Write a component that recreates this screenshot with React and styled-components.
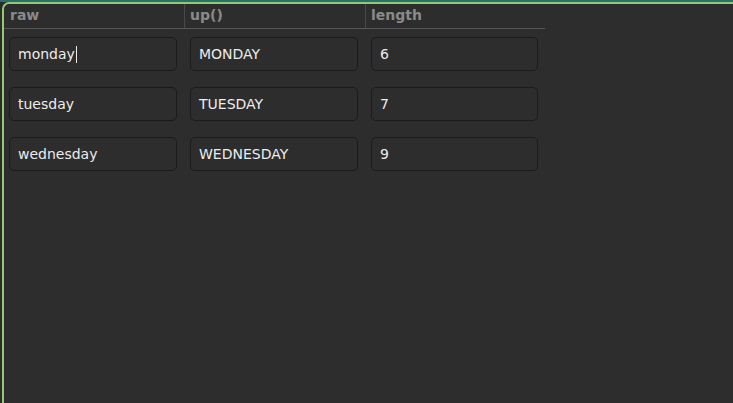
import React from "react";
import styled, { createGlobalStyle } from "styled-components";

const GlobalStyle = createGlobalStyle`
  html, body {
    margin: 0;
    padding: 0;
    background: #2b2b2b;
    overflow: hidden;
  }
  body {
    font-family: "DejaVu Sans", "Noto Sans", sans-serif;
  }
`;

const rows = [
  { raw: "monday", focused: true },
  { raw: "tuesday" },
  { raw: "wednesday" },
];

export default function App() {
  return (
    <>
      <GlobalStyle />
      <Screen>
        <TopStrip />
        <Window>
          <Table>
            <HeaderRow>
              <HeaderCell>raw</HeaderCell>
              <HeaderCell>up()</HeaderCell>
              <HeaderCell>length</HeaderCell>
            </HeaderRow>
            {rows.map((r) => (
              <Row key={r.raw}>
                <Field>
                  {r.raw}
                  {r.focused && <Caret />}
                </Field>
                <Field>{r.raw.toUpperCase()}</Field>
                <Field>{r.raw.length}</Field>
              </Row>
            ))}
          </Table>
        </Window>
      </Screen>
    </>
  );
}

const Screen = styled.div`
  width: 733px;
  height: 403px;
  display: flex;
  flex-direction: column;
  background: #2b2b2b;
`;

const TopStrip = styled.div`
  height: 2px;
  background: #2a6f6c;
  flex-shrink: 0;
`;

const Window = styled.div`
  flex: 1;
  margin-left: 2px;
  background: #2d2d2d;
  border-top: 2px solid #8fcb73;
  border-left: 2px solid #8fcb73;
  border-top-left-radius: 7px;
`;

const Table = styled.div`
  width: 541px;
  display: flex;
  flex-direction: column;
`;

const HeaderRow = styled.div`
  display: grid;
  grid-template-columns: 180px 181px 180px;
  height: 24px;
  border-bottom: 1px solid #565656;
`;

const HeaderCell = styled.div`
  padding-left: 5px;
  font-size: 14px;
  font-weight: 700;
  color: #8a8a8a;
  line-height: 22px;
  border-left: 1px solid #4a4a4a;
  &:first-child {
    border-left: none;
    padding-left: 6px;
  }
`;

const Row = styled.div`
  display: grid;
  grid-template-columns: 180px 181px 180px;
  padding-top: 8px;
  padding-bottom: 8px;
`;

const Field = styled.div`
  margin: 0 7px 0 5px;
  height: 34px;
  box-sizing: border-box;
  border: 1px solid #1b1b1b;
  border-radius: 5px;
  background: #2d2d2d;
  color: #ececec;
  font-size: 14px;
  display: flex;
  align-items: center;
  padding-left: 8px;
  &:nth-child(2), &:nth-child(3) {
    margin-left: 6px;
  }
`;

const Caret = styled.span`
  display: inline-block;
  width: 1px;
  height: 17px;
  background: #ececec;
  margin-left: 1px;
`;
